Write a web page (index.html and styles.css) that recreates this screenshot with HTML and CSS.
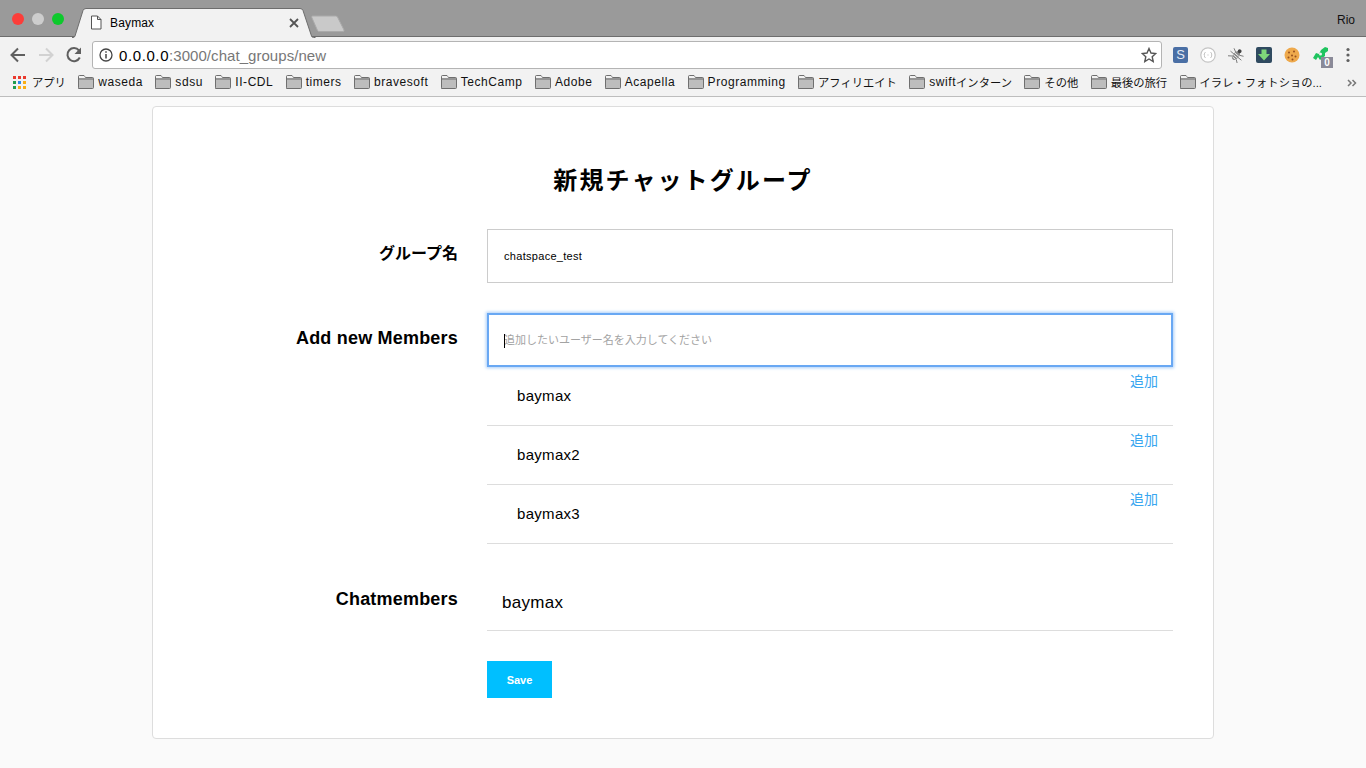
FILE: index.html
```html
<!DOCTYPE html>
<html lang="ja">
<head>
<meta charset="utf-8">
<title>Baymax</title>
<link rel="stylesheet" href="styles.css">
</head>
<body>
<svg class="defs" width="0" height="0" aria-hidden="true"><defs>
<symbol id="folder" viewBox="0 0 16 14"><path d="M.5 12.500V1.500q0-1 1-1h4.500l1.500 2h7q1 0 1 1v9q0 1-1 1h-14q-.5 0-.5-1z" fill="#bdbdbd" stroke="#6f6f6f"/><path d="M.5 4h15" stroke="#6f6f6f" fill="none"/><path d="M1 1h5l1.300 2H1z" fill="#f2f2f2"/></symbol>
</defs></svg>
<header class="browser">
  <div class="tabbar">
    <div class="lights"><i class="light red"></i><i class="light grey"></i><i class="light green"></i></div>
    <div class="tab">
      <svg class="tab-shape" width="244" height="30" viewBox="0 0 244 30"><path d="M0 29.500h1q1.500 0 2-1.500L11 2.500Q11.700.5 14 .5h214q2.300 0 3 2l8.500 25.500q.5 1.500 2 1.500h2" fill="#f2f2f2" stroke="#6d6d6d"/></svg>
      <svg class="tab-file" width="12" height="15" viewBox="0 0 12 15"><path d="M1.500 1h6l3.500 3.500V14h-9.500zM7.500 1v3.500H11" fill="#fff" stroke="#555"/></svg>
      <span class="tab-title">Baymax</span>
      <svg class="tab-close" width="10" height="10" viewBox="0 0 10 10"><path d="M1 1l8 8M9 1l-8 8" stroke="#555" stroke-width="1.800"/></svg>
    </div>
    <svg class="newtab" width="36" height="18" viewBox="0 0 36 18"><path d="M1.500 1h23q1.500 0 2 1l6.500 13q.5 1.500-1 1.500h-24q-1 0-1.500-1L.8 2.500Q.5 1 1.500 1z" fill="#c9c9c9" stroke="#aaa"/></svg>
    <span class="profile">Rio</span>
  </div>
  <div class="toolbar">
    <svg class="nav" width="20" height="20" viewBox="0 0 20 20"><path d="M17 10H4M10 3.500L3.500 10l6.500 6.500" fill="none" stroke="#5f5f5f" stroke-width="2"/></svg>
    <svg class="nav" width="20" height="20" viewBox="0 0 20 20"><path d="M3 10h13M10 3.500l6.500 6.500-6.500 6.500" fill="none" stroke="#d2d2d2" stroke-width="2"/></svg>
    <svg class="nav" width="20" height="20" viewBox="0 0 20 20"><path d="M15.800 12.500A6.500 6.500 0 1 1 15 5.500" fill="none" stroke="#5f5f5f" stroke-width="2"/><path d="M17 2.500V9h-6.500z" fill="#5f5f5f"/></svg>
    <div class="omnibox">
      <svg class="info" width="14" height="14" viewBox="0 0 14 14"><circle cx="7" cy="7" r="6" fill="none" stroke="#444" stroke-width="1.300"/><path d="M7 6v4.500M7 3.300v1.500" stroke="#444" stroke-width="1.500"/></svg>
      <span class="url"><span class="host">0.0.0.0</span>:3000/chat_groups/new</span>
      <svg class="star" width="16" height="16" viewBox="0 0 16 16"><path d="M8 1.500l2 4.500 4.800.5-3.600 3.200 1 4.800L8 12l-4.200 2.500 1-4.800-3.600-3.200L6 6z" fill="none" stroke="#555" stroke-width="1.400"/></svg>
    </div>
    <div class="extensions">
      <span class="ext ext-s">S</span>
      <svg class="ext-svg" width="16" height="16" viewBox="0 0 16 16"><circle cx="8" cy="8" r="7.200" fill="#fff" stroke="#c4c4c4" stroke-width="1.200"/><path d="M5.500 5.500q-1 0-1 1v.8l-.7.700.7.700v.8q0 1 1 1M10.500 5.500q1 0 1 1v.8l.7.700-.7.700v.8q0 1-1 1M7.500 8h1" fill="none" stroke="#a8a8a8" stroke-width=".8"/></svg>
      <svg class="ext-svg" width="17" height="16" viewBox="0 0 18 18"><g transform="rotate(40 9 9)"><ellipse cx="9" cy="10" rx="3.400" ry="5.500" fill="#8a8a8a"/><circle cx="9" cy="3.500" r="2.200" fill="#444"/><path d="M6 7L2 5M6 10H1M6 13l-4 3M12 7l4-2M12 10h5M12 13l4 3" stroke="#777"/><path d="M6 8.500h6M6 11h6M7 13.500h4" stroke="#eee"/></g></svg>
      <svg class="ext-svg dl" width="16" height="16" viewBox="0 0 16 16"><rect width="16" height="16" rx="2" fill="#2f4a60"/><path d="M5.500 2.500h5V7H14l-6 6.500L2 7h3.500z" fill="#7ed87a"/></svg>
      <svg class="ext-svg" width="16" height="16" viewBox="0 0 16 16"><circle cx="8" cy="8" r="7.500" fill="#eea94c"/><circle cx="5" cy="5.500" r="1" fill="#96501e"/><circle cx="10" cy="4.500" r="1" fill="#96501e"/><circle cx="8" cy="8.500" r="1" fill="#96501e"/><circle cx="4.500" cy="10.500" r="1" fill="#96501e"/><circle cx="11.500" cy="9.500" r="1" fill="#96501e"/><circle cx="8.500" cy="12.500" r="1" fill="#96501e"/></svg>
      <div class="ext-badge">
        <svg width="16" height="15" viewBox="0 1 16 15"><path d="M0 12l3-5 3 1 2-4 4-3 3 1v3l-3 2v3l-5 4-2-3-2 3z" fill="#1fc45f"/><circle cx="7.500" cy="8" r="1.500" fill="#f2f2f2"/></svg>
        <span class="badge">0</span>
      </div>
      <svg class="ext-menu" width="4" height="16" viewBox="0 0 4 16"><circle cx="2" cy="2.500" r="1.600" fill="#5f5f5f"/><circle cx="2" cy="8" r="1.600" fill="#5f5f5f"/><circle cx="2" cy="13.500" r="1.600" fill="#5f5f5f"/></svg>
    </div>
  </div>
  <nav class="bookmarks">
    <span class="bm"><span class="apps-grid"><i class="c-r"></i><i class="c-r"></i><i class="c-r"></i><i class="c-g"></i><i class="c-b"></i><i class="c-y"></i><i class="c-g"></i><i class="c-y"></i><i class="c-y"></i></span><span class="jp">アプリ</span></span>
    <span class="bm"><svg class="fd"><use href="#folder"/></svg>waseda</span>
    <span class="bm"><svg class="fd"><use href="#folder"/></svg>sdsu</span>
    <span class="bm"><svg class="fd"><use href="#folder"/></svg>II-CDL</span>
    <span class="bm"><svg class="fd"><use href="#folder"/></svg>timers</span>
    <span class="bm"><svg class="fd"><use href="#folder"/></svg>bravesoft</span>
    <span class="bm"><svg class="fd"><use href="#folder"/></svg>TechCamp</span>
    <span class="bm"><svg class="fd"><use href="#folder"/></svg>Adobe</span>
    <span class="bm"><svg class="fd"><use href="#folder"/></svg>Acapella</span>
    <span class="bm"><svg class="fd"><use href="#folder"/></svg>Programming</span>
    <span class="bm"><svg class="fd"><use href="#folder"/></svg><span class="jp">アフィリエイト</span></span>
    <span class="bm"><svg class="fd"><use href="#folder"/></svg>swift<span class="jp">インターン</span></span>
    <span class="bm"><svg class="fd"><use href="#folder"/></svg><span class="jp">その他</span></span>
    <span class="bm"><svg class="fd"><use href="#folder"/></svg><span class="jp">最後の旅行</span></span>
    <span class="bm"><svg class="fd"><use href="#folder"/></svg><span class="jp">イラレ・フォトショの...</span></span>
    <svg class="more" width="10" height="8" viewBox="0 0 10 8"><path d="M1 1l3 3-3 3M5.500 1l3 3-3 3" fill="none" stroke="#777" stroke-width="1.500"/></svg>
  </nav>
</header>
<main class="page">
  <section class="card">
    <h1 class="title">新規チャットグループ</h1>
    <div class="row row-name">
      <label class="label">グループ名</label>
      <div class="field"><div class="input"><span class="value">chatspace_test</span></div></div>
    </div>
    <div class="row row-add">
      <label class="label label-add">Add new Members</label>
      <div class="field">
        <div class="input input-focus"><i class="caret"></i><span class="placeholder">追加したいユーザー名を入力してください</span></div>
        <ul class="results">
          <li class="result"><span class="result-name">baymax</span><a class="add">追加</a></li>
          <li class="result"><span class="result-name">baymax2</span><a class="add">追加</a></li>
          <li class="result"><span class="result-name">baymax3</span><a class="add">追加</a></li>
        </ul>
      </div>
    </div>
    <div class="row row-members">
      <label class="label label-add">Chatmembers</label>
      <div class="field"><div class="member">baymax</div></div>
    </div>
    <div class="row row-save">
      <span class="label"></span>
      <div class="field"><button class="save" type="button">Save</button></div>
    </div>
  </section>
</main>
</body>
</html>
```

FILE: styles.css
```css
* { box-sizing: border-box; }
html, body { margin: 0; height: 768px; overflow: hidden; }
body { background: #fafafa; font-family: "Liberation Sans", "Noto Sans CJK JP", sans-serif; color: #000; }
.defs { display: block; height: 0; }
.browser { height: 97px; background: #f2f2f2; border-bottom: 1px solid #bdbdbd; }

.tabbar { height: 37px; background: #9a9a9a; border-bottom: 1px solid #6d6d6d; display: flex; align-items: flex-start; position: relative; }
.lights { display: flex; gap: 8px; padding: 13px 0 0 12px; width: 72px; }
.light { width: 12px; height: 12px; border-radius: 50%; }
.red { background: #fc3d39; }
.grey { background: #cdcdcd; }
.green { background: #0dc92c; }
.tab { position: relative; width: 244px; height: 29px; margin-top: 8px; display: flex; align-items: center; padding: 0 0 0 18px; }
.tab-shape { position: absolute; left: 0; top: 0; }
.tab-file { position: relative; margin-right: 8px; }
.tab-title { position: relative; font-size: 12px; flex: 1; letter-spacing: .15px; }
.tab-close { position: relative; margin-right: 17px; }
.newtab { margin: 15px 0 0 -5px; }
.profile { margin-left: auto; padding: 13px 11px 0 0; font-size: 12px; color: #111; }

.toolbar { height: 32px; display: flex; align-items: center; padding: 4px 4px 0 8px; }
.nav { margin-right: 8px; flex: none; }
.omnibox { width: 1070px; height: 28px; background: #fff; border: 1px solid #b4b4b4; border-radius: 3px; display: flex; align-items: center; padding: 0 4px 0 6px; }
.info { margin-right: 6px; }
.url { flex: 1; font-size: 15px; letter-spacing: .05px; color: #777; }
.host { color: #000; letter-spacing: .6px; }
.extensions { flex: 1; display: flex; align-items: center; padding-left: 11px; gap: 12px; }
.ext { width: 15px; height: 16px; background: #4a6fa5; color: #e4ebf5; border-radius: 2px; font-size: 13px; line-height: 16px; text-align: center; flex: none; }
.ext-svg { flex: none; }
.dl { margin-left: -1px; }
.ext-badge { position: relative; width: 16px; height: 16px; margin: 0 5px 0 1px; flex: none; }
.ext-badge svg { display: block; }
.badge { position: absolute; left: 8px; top: 10px; width: 12px; height: 11px; background: #8a8a98; color: #fff; font-size: 10px; font-weight: 700; line-height: 11px; text-align: center; }

.bookmarks { height: 27px; display: flex; align-items: center; padding: 0 0 1px 13px; gap: 12.400px; font-size: 12px; color: #111; position: relative; white-space: nowrap; }
.bm { display: flex; align-items: center; letter-spacing: .55px; }
.jp { font-size: 11.300px; letter-spacing: 0; }
.fd { width: 16px; height: 14px; margin-right: 4px; flex: none; }
.apps-grid { display: grid; grid-template-columns: repeat(3, 3px); grid-auto-rows: 3px; gap: 2px; margin-right: 6px; }
.c-r { background: #ea3a2e; }
.c-b { background: #2a8ae8; }
.c-y { background: #f9ae14; }
.c-g { background: #1f9d4f; }
.more { position: absolute; right: 9px; top: 10px; }

.page { padding-top: 9px; }
.card { width: 1062px; height: 633px; margin: 0 0 0 152px; background: #fff; border: 1px solid #ddd; border-radius: 4px; padding-top: 59px; }
.title { margin: 0 0 33px; height: 30px; text-align: center; font-size: 24px; line-height: 30px; font-weight: 700; letter-spacing: 2.100px; }
.row { display: grid; grid-template-columns: 305px 686px; column-gap: 29px; }
.label { text-align: right; font-weight: 700; font-size: 16px; line-height: 24px; padding-top: 13px; }
.label-add { font-size: 18px; letter-spacing: .2px; }
.row-name { margin-bottom: 30px; }
.input { height: 54px; border: 1px solid #ccc; display: flex; align-items: center; padding: 0 16px; font-size: 11px; position: relative; }
.value { letter-spacing: .3px; }
.input-focus { border: 2px solid #69a8f3; box-shadow: 0 0 3px 1px #a8cdf8; padding: 0 15px 2px; }
.caret { position: absolute; left: 15px; top: 19px; width: 1px; height: 14px; background: #000; }
.placeholder { color: #a3a3a3; font-size: 11px; }
.results { list-style: none; margin: 0; padding: 0; }
.result { height: 59px; border-bottom: 1px solid #ddd; display: flex; justify-content: space-between; padding: 0 15px 0 30px; }
.result-name { font-size: 15px; line-height: 58px; letter-spacing: .3px; }
.add { font-size: 14px; line-height: 28px; color: #38a6f0; }
.row-members { margin-top: 27px; }
.row-members .label { padding-top: 16px; }
.member { height: 60px; border-bottom: 1px solid #ddd; padding: 22px 0 0 15px; font-size: 17px; line-height: 20px; letter-spacing: .3px; }
.row-save { margin-top: 30px; }
.row-save .label { padding: 0; }
.save { display: block; width: 65px; height: 37px; padding: 0; border: 0; background: #00bfff; color: #fff; font: 700 11px "Liberation Sans", sans-serif; }
```
